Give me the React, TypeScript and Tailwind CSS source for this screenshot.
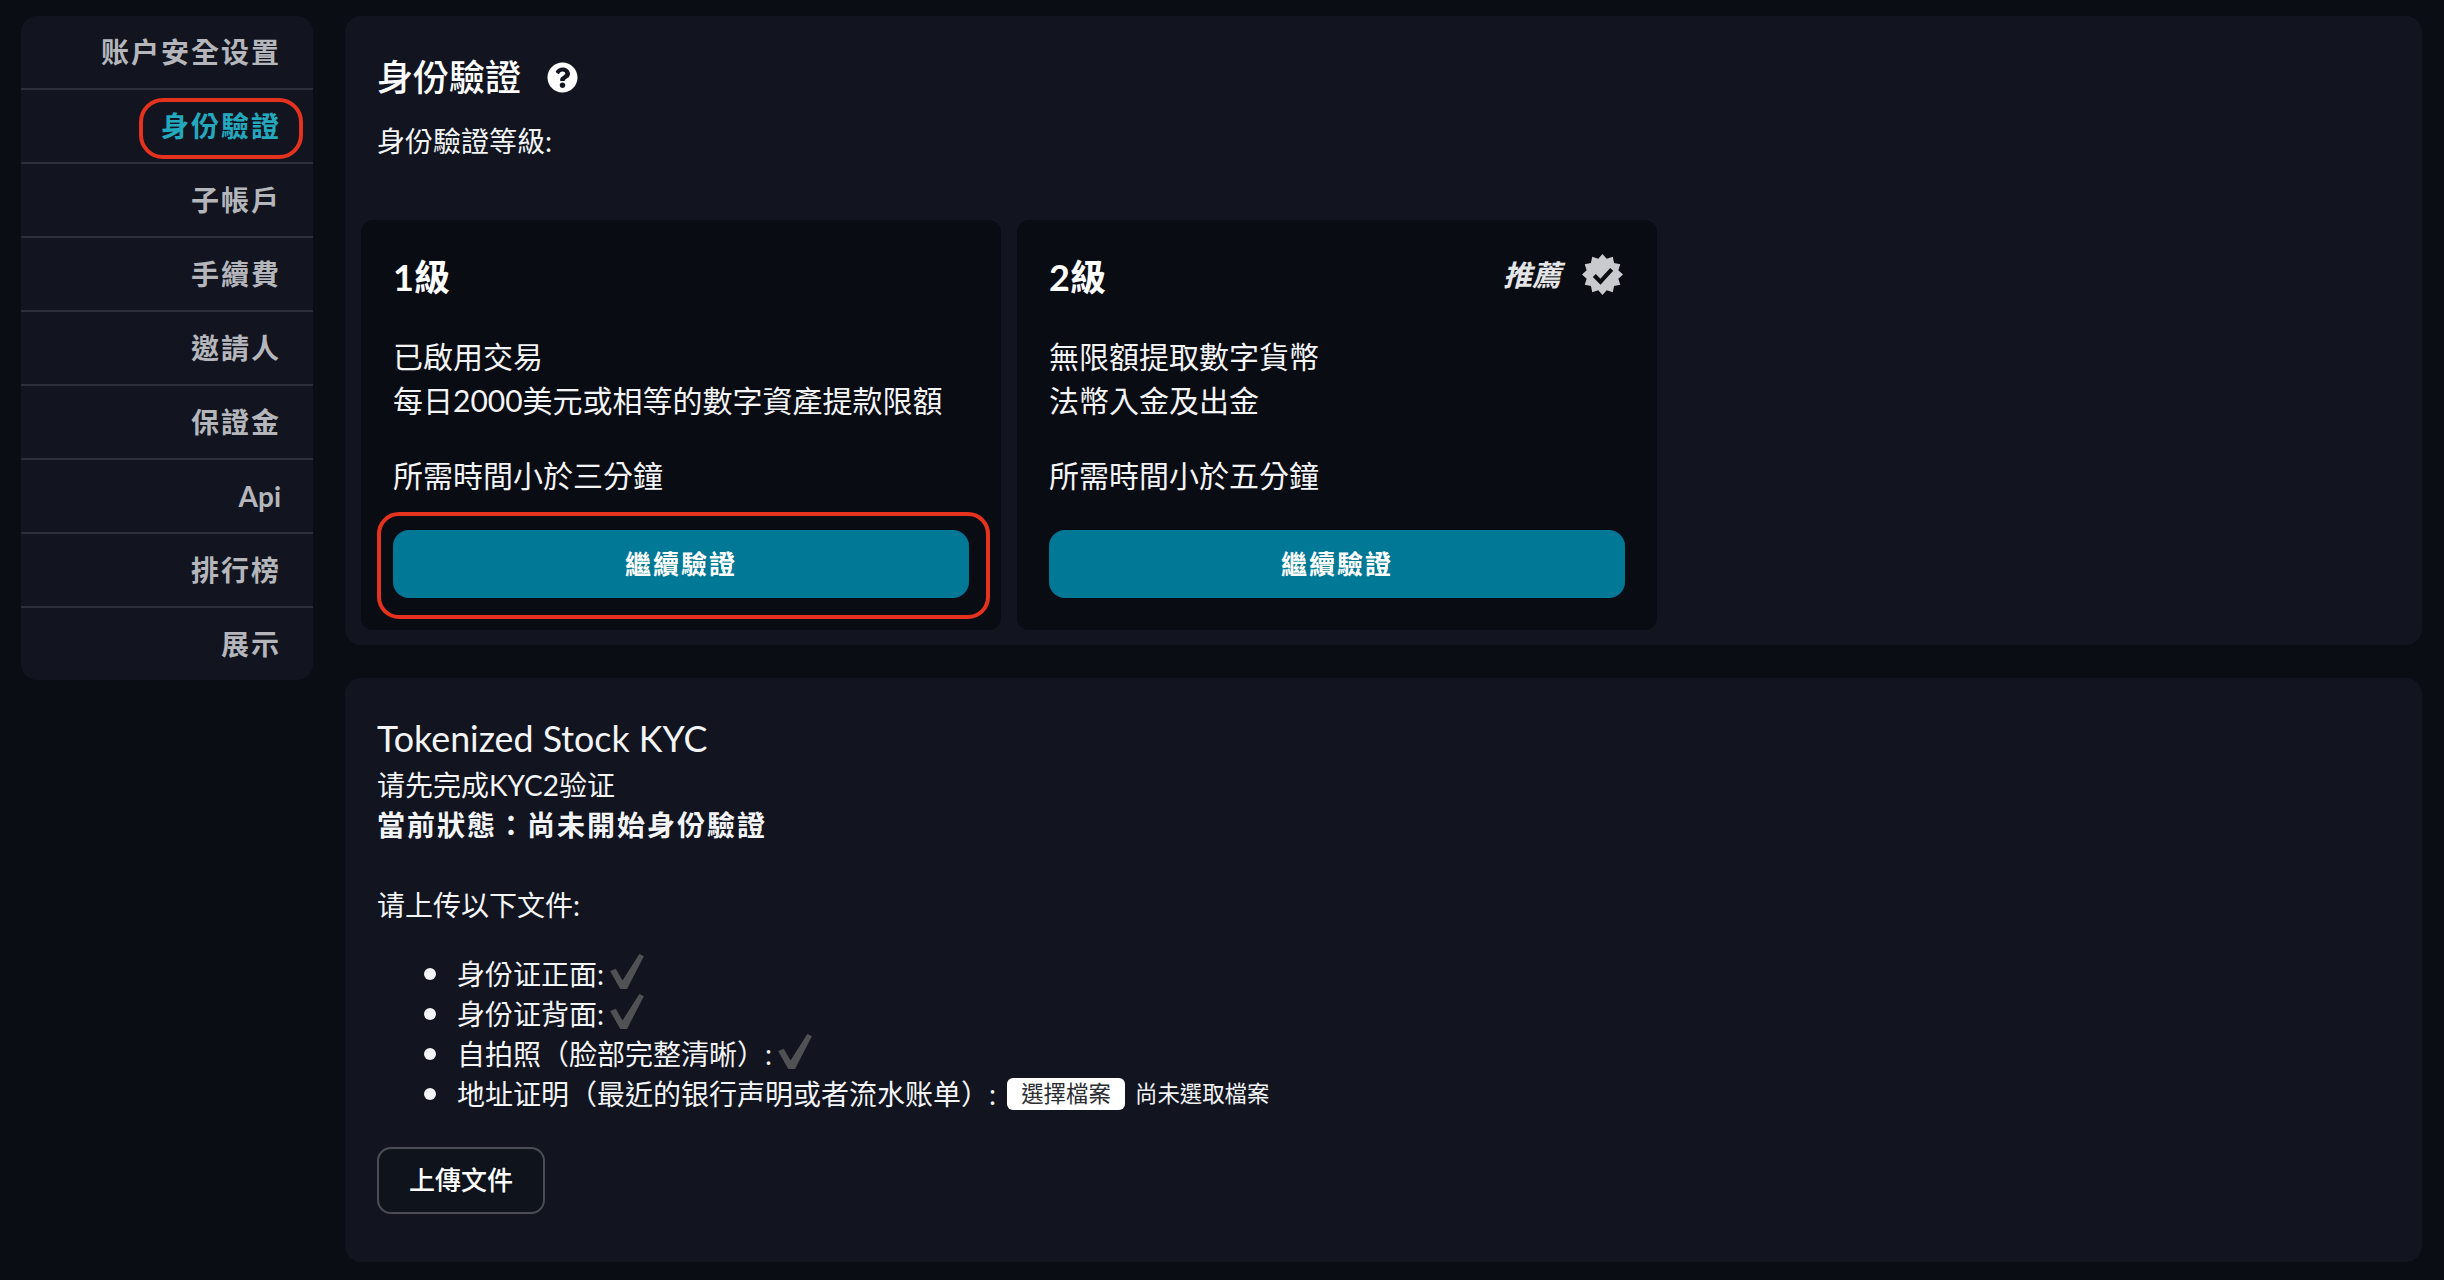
import { FaQuestionCircle } from "react-icons/fa";

const menuItems = ["账户安全设置", "身份驗證", "子帳戶", "手續費", "邀請人", "保證金", "Api", "排行榜", "展示"];

// 12 point badge behind the check mark
const badgePoints = Array.from({ length: 24 }, (_, i) => {
  const r = i % 2 === 0 ? 20 : 16;
  const a = (i * Math.PI) / 12;
  return `${20 + r * Math.sin(a)},${20 - r * Math.cos(a)}`;
}).join(" ");

const Badge = () => (
  <svg viewBox="0 0 40 40" className="w-[41px] h-[41px]">
    <polygon points={badgePoints} fill="#c9cacd" />
    <path d="M12 21l6 6 11-12" fill="none" stroke="#0a0c13" strokeWidth="4" />
  </svg>
);

const Tick = () => (
  <svg viewBox="0 0 32 36" preserveAspectRatio="none" className="inline-block w-[36px] h-[38px] ml-[5px] -mt-[4px]">
    <path d="M1 17l5-2 6 11L27 1l4 2-15 31h-6z" fill="#4f5154" />
  </svg>
);

const Bullet = () => <span className="w-[12px] h-[12px] rounded-full bg-[#f3f4f6] mr-[21px] shrink-0" />;

type LevelCardProps = {
  level: string;
  lines: string[];
  time: string;
  recommended?: boolean;
  highlighted?: boolean;
};

const LevelCard = ({ level, lines, time, recommended, highlighted }: LevelCardProps) => (
  <div className="relative w-[640px] h-[410px] bg-[#0a0c13] rounded-xl px-8 pt-[36px]">
    <div className="flex items-center justify-between h-[42px]">
      <span className="text-[36px] font-bold text-white">{level}</span>
      {recommended && (
        <span className="flex items-center gap-[21px] -mt-[5px] mr-[2px]">
          <span className="text-[29px] font-bold italic text-[#e4e5e7]">推薦</span>
          <Badge />
        </span>
      )}
    </div>
    <div className="mt-[36px] text-[30px] leading-[44px] text-[#f3f4f6]">
      {lines.map((line) => (
        <div key={line}>{line}</div>
      ))}
    </div>
    <div className="mt-[31px] text-[30px] leading-[44px] text-[#f3f4f6]">{time}</div>
    <button className="mt-[33px] w-full h-[68px] rounded-[16px] bg-[#007896] text-white text-[26px] font-bold tracking-[2px]">
      繼續驗證
    </button>
    {highlighted && (
      <div className="absolute left-[16px] right-[11px] top-[292px] h-[107px] border-[4px] border-[#e5321f] rounded-[22px]" />
    )}
  </div>
);

export default function App() {
  return (
    <div
      className="min-h-[1280px] bg-[#0a0d14] flex gap-[32px] pl-[21px] pr-[22px] pt-[16px] pb-[18px] text-white"
      style={{ fontFamily: 'Lato, "Noto Sans CJK TC", sans-serif' }}
    >
      {/* Sidebar */}
      <div className="relative w-[292px] shrink-0 self-start bg-[#12151f] rounded-2xl overflow-hidden">
        {menuItems.map((item, index) => (
          <div
            key={item}
            className={`flex items-center justify-end pr-[32px] text-[28px] font-bold ${
              item === "Api" ? "tracking-normal" : "tracking-[2px]"
            } ${index > 0 ? "h-[74px] border-t-2 border-[#2c303a]" : "h-[72px]"} ${
              index === 1 ? "text-[#24a8bd]" : "text-[#b4b6bb]"
            }`}
          >
            {item}
          </div>
        ))}
        <div className="absolute left-[118px] top-[82px] w-[164px] h-[61px] border-[4px] border-[#e5321f] rounded-[24px]" />
      </div>

      {/* Main column */}
      <div className="flex-1 flex flex-col gap-[33px]">
        <div className="bg-[#12151f] rounded-2xl h-[629px] px-4 pt-[35px]">
          <div className="px-4">
            <div className="flex items-center gap-[26px] h-[52px]">
              <h1 className="text-[36px] font-medium text-white">身份驗證</h1>
              <FaQuestionCircle className="text-white w-[31px] h-[31px]" />
            </div>
            <div className="mt-[18px] text-[28px] leading-[40px] text-[#f3f4f6]">身份驗證等級:</div>
          </div>
          <div className="flex gap-[16px] mt-[59px]">
            <LevelCard
              level="1級"
              lines={["已啟用交易", "每日2000美元或相等的數字資產提款限額"]}
              time="所需時間小於三分鐘"
              highlighted
            />
            <LevelCard
              level="2級"
              lines={["無限額提取數字貨幣", "法幣入金及出金"]}
              time="所需時間小於五分鐘"
              recommended
            />
          </div>
        </div>

        <div className="bg-[#12151f] rounded-2xl flex-1 px-8 pt-[36px]">
          <h2 className="text-[35.8px] leading-[50px] text-[#f3f4f6]">Tokenized Stock KYC</h2>
          <div className="mt-[2px] text-[28px] leading-[39px] text-[#f3f4f6]">请先完成KYC2验证</div>
          <div className="text-[28px] leading-[40px] font-bold tracking-[2px] text-[#f3f4f6]">當前狀態：尚未開始身份驗證</div>
          <div className="mt-[40px] text-[28px] leading-[40px] text-[#f3f4f6]">请上传以下文件:</div>
          <ul className="mt-[29px] pl-[47px] text-[28px] leading-[40px] text-[#f3f4f6]">
            <li className="flex items-center">
              <Bullet />
              身份证正面:
              <Tick />
            </li>
            <li className="flex items-center">
              <Bullet />
              身份证背面:
              <Tick />
            </li>
            <li className="flex items-center">
              <Bullet />
              自拍照（脸部完整清晰）:
              <Tick />
            </li>
            <li className="flex items-center">
              <Bullet />
              地址证明（最近的银行声明或者流水账单）:
              <span className="inline-flex items-center ml-[11px] text-[22.4px]">
                <span className="inline-flex items-center justify-center w-[118px] h-[32px] bg-white rounded-md text-[#2b2d33]">
                  選擇檔案
                </span>
                <span className="ml-[10px] text-[#f3f4f6]">尚未選取檔案</span>
              </span>
            </li>
          </ul>
          <button className="mt-[33px] w-[168px] h-[67px] rounded-[14px] border-2 border-[#4a4d55] bg-[#0f131c] text-[26px] font-medium text-white">
            上傳文件
          </button>
        </div>
      </div>
    </div>
  );
}
